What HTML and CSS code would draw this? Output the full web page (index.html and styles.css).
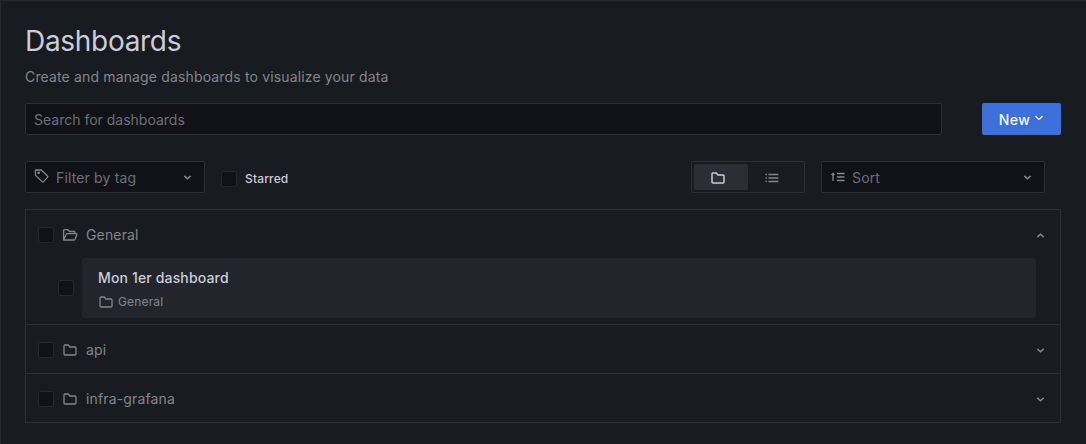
FILE: index.html
```html
<!DOCTYPE html>
<html lang="en">
<head>
    <meta charset="UTF-8">
    <title>Dashboards</title>
    <link rel="stylesheet" href="styles.css">
</head>
<body>
    <div class="page">
        <h1>Dashboards</h1>
        <p class="subtitle">Create and manage dashboards to visualize your data</p>

        <div class="action-row">
            <div class="field search">Search for dashboards</div>
            <button class="new-btn">New
                <svg class="chev-small" viewBox="0 0 10 6"><path d="M1.5 1.2 5 4.4l3.5-3.2"/></svg>
            </button>
        </div>

        <div class="filter-row">
            <div class="field filter">
                <svg class="icon" viewBox="0 0 16 16"><path d="M2 2.6 2.1 8l6.6 6.2a1 1 0 0 0 1.4 0l4-4.2a1 1 0 0 0 0-1.4L7.6 2.4z" transform="translate(-.6 -.6)"/><circle cx="4.7" cy="4.8" r=".7"/></svg>
                <span class="grow">Filter by tag</span>
                <svg class="chev" viewBox="0 0 10 6"><path d="M1.2 1 5 4.6 8.8 1"/></svg>
            </div>
            <span class="checkbox"></span>
            <span class="starred">Starred</span>
            <div class="layout-switch">
                <span class="switch-opt active">
                    <svg class="icon" viewBox="0 0 16 16"><use href="#folder"/></svg>
                </span>
                <span class="switch-opt">
                    <svg class="icon list" viewBox="0 0 16 16"><path d="M1.5 4.5h1.4M4.4 4.5h10M1.5 8h1.4M4.4 8h10M1.5 11.5h1.4M4.4 11.5h10"/></svg>
                </span>
            </div>
            <div class="field sort">
                <svg class="icon" viewBox="0 0 16 16"><path d="M3 12V4.4M1.6 6 3 4.3 4.4 6M7 4.5h7.5M7 8h7.5M7 11.5h7.5"/></svg>
                <span class="grow">Sort</span>
                <svg class="chev" viewBox="0 0 10 6"><path d="M1.2 1 5 4.6 8.8 1"/></svg>
            </div>
        </div>

        <div class="folders">
            <div class="folder open">
                <div class="folder-head">
                    <span class="checkbox"></span>
                    <svg class="icon" viewBox="0 0 16 16"><path d="M1.6 13V3.6a.9.9 0 0 1 .9-.9h3.4l1.6 1.8h4.6a.9.9 0 0 1 .9.9v1.5M1.6 13h10.6a1 1 0 0 0 .9-.7l1.7-4.6a.7.7 0 0 0-.7-1H5a1 1 0 0 0-.9.7z"/></svg>
                    <span class="grow">General</span>
                    <svg class="chev" viewBox="0 0 10 6"><path d="M1.2 5 5 1.4 8.8 5"/></svg>
                </div>
                <div class="item-row">
                    <span class="checkbox"></span>
                    <div class="item">
                        <div class="item-title">Mon 1er dashboard</div>
                        <div class="item-meta">
                            <svg class="icon" viewBox="0 0 16 16"><use href="#folder"/></svg>
                            General
                        </div>
                    </div>
                </div>
            </div>
            <div class="folder">
                <div class="folder-head">
                    <span class="checkbox"></span>
                    <svg class="icon" viewBox="0 0 16 16"><use href="#folder"/></svg>
                    <span class="grow">api</span>
                    <svg class="chev" viewBox="0 0 10 6"><path d="M1.2 1 5 4.6 8.8 1"/></svg>
                </div>
            </div>
            <div class="folder">
                <div class="folder-head">
                    <span class="checkbox"></span>
                    <svg class="icon" viewBox="0 0 16 16"><use href="#folder"/></svg>
                    <span class="grow">infra-grafana</span>
                    <svg class="chev" viewBox="0 0 10 6"><path d="M1.2 1 5 4.6 8.8 1"/></svg>
                </div>
            </div>
        </div>
    </div>

    <svg class="defs" width="0" height="0">
        <symbol id="folder" viewBox="0 0 16 16">
            <path d="M2 4a1 1 0 0 1 1-1h3.3l1.6 2H13a1 1 0 0 1 1 1v6a1 1 0 0 1-1 1H3a1 1 0 0 1-1-1z"/>
        </symbol>
    </svg>
</body>
</html>
```

FILE: styles.css
```css
/* General */
* {
    box-sizing: border-box;
}

body {
    margin: 0;
    background-color: #181b1f;
    color: #ccccdc;
    font-family: 'Inter', sans-serif;
    font-size: 14px;
    letter-spacing: 0.15px;
}

.page {
    height: 444px;
    padding: 24px 25px 0 24px;
    border-top: 1px solid #25282d;
    border-left: 1px solid #25282d;
    overflow: hidden;
}

.defs {
    position: absolute;
}

.grow {
    flex: 1;
}

/* Title */
h1 {
    margin: 0;
    font-size: 28px;
    font-weight: 400;
    line-height: 32px;
    letter-spacing: -0.3px;
}

.subtitle {
    margin: 8px 0 0;
    height: 38px;
    line-height: 23px;
    color: #85868d;
}

/* Icons */
.icon {
    width: 16px;
    height: 16px;
    flex: none;
    fill: none;
    stroke: #85868d;
    stroke-width: 1.3;
    stroke-linejoin: round;
}

.chev,
.chev-small {
    flex: none;
    fill: none;
    stroke-width: 1.8;
}

.chev {
    width: 9px;
    height: 5px;
    stroke: #85868d;
}

.chev-small {
    width: 10px;
    height: 6px;
    margin-top: -2px;
    stroke: #fff;
    stroke-width: 1.3;
}

/* Fields */
.field {
    display: flex;
    align-items: center;
    height: 32px;
    background-color: #111217;
    border: 1px solid #2d2f34;
    border-radius: 2px;
    color: #6e6f76;
}

.action-row {
    display: flex;
    justify-content: space-between;
}

.search {
    width: 917px;
    padding-left: 8px;
    letter-spacing: 0;
}

.new-btn {
    display: flex;
    align-items: center;
    justify-content: center;
    gap: 4px;
    width: 79px;
    height: 32px;
    padding: 0;
    background-color: #3d71d9;
    border: none;
    border-radius: 2px;
    color: #f4f5f8;
    font-family: inherit;
    font-size: 14px;
    font-weight: 450;
    letter-spacing: 0.5px;
}

/* Filters */
.filter-row {
    display: flex;
    align-items: center;
    margin-top: 26px;
}

.filter {
    width: 180px;
    padding: 0 12px 0 8px;
    gap: 6px;
}

.filter .icon {
    margin-top: -2px;
}

.sort {
    width: 224px;
    margin-left: 16px;
    padding: 0 12px 0 8px;
    gap: 6px;
}

.starred {
    width: 446px;
    margin-top: 2px;
    margin-left: 8px;
    font-size: 12px;
    font-weight: 450;
}

.checkbox {
    display: block;
    flex: none;
    width: 16px;
    height: 16px;
    background-color: #111217;
    border: 1px solid #26282d;
    border-radius: 2px;
}

.filter-row .checkbox {
    margin-top: 4px;
    margin-left: 16px;
}

.layout-switch {
    display: flex;
    width: 114px;
    height: 32px;
    padding: 2px;
    border: 1px solid #2d2f34;
    border-radius: 2px;
}

.switch-opt {
    display: flex;
    align-items: center;
    justify-content: center;
    width: 54px;
    padding: 2px 6px 0 0;
    border-radius: 2px;
}

.switch-opt.active {
    background-color: #2b2e34;
}

.switch-opt.active .icon {
    stroke: #ccccdc;
    stroke-width: 1.5;
}

/* Folder list */
.folders {
    margin-top: 16px;
    width: 1036px;
    border: 1px solid #2d2f34;
}

.folder + .folder {
    border-top: 1px solid #2d2f34;
}

.folder.open {
    height: 114px;
}

.folder-head {
    display: flex;
    align-items: center;
    height: 48px;
    padding: 2px 15px 0 12px;
    color: #85868d;
}

.folder-head .icon {
    margin: 0 8px;
}

.folder-head .grow {
    margin-top: -2px;
}

.item-row {
    display: flex;
    align-items: center;
    padding-left: 32px;
}

.item {
    width: 954px;
    height: 60px;
    margin-left: 8px;
    padding: 10px 16px 0;
    background-color: #22252b;
    border-radius: 2px;
}

.item-title {
    line-height: 20px;
    font-weight: 450;
}

.item-meta {
    display: flex;
    align-items: center;
    gap: 4px;
    margin-top: 4px;
    font-size: 12px;
    line-height: 20px;
    color: #85868d;
}
```
